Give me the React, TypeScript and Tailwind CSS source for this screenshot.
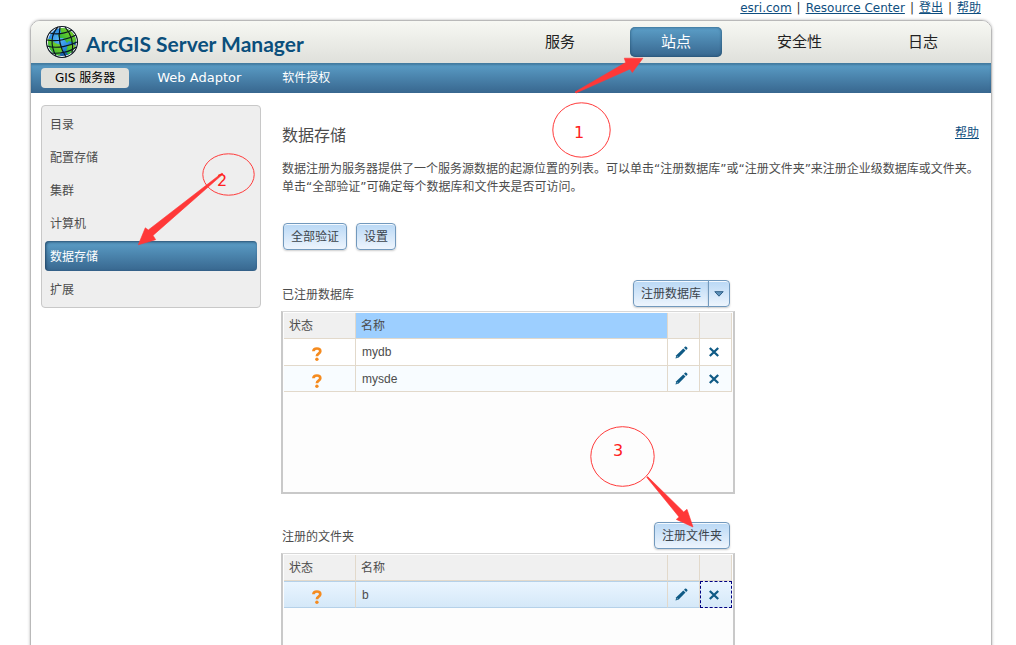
import React from "react";

const topLinks = ["esri.com", "Resource Center", "登出", "帮助"];
const mainTabs = ["服务", "站点", "安全性", "日志"];
const sideItems = ["目录", "配置存储", "集群", "计算机", "数据存储", "扩展"];

function Globe() {
  return (
    <svg viewBox="0 0 34 34" className="size-[34px] shrink-0" aria-hidden="true">
      <defs>
        <radialGradient id="sea" cx="0.4" cy="0.4" r="0.65">
          <stop offset="0" stopColor="#5cbcf8" />
          <stop offset="0.6" stopColor="#2484de" />
          <stop offset="1" stopColor="#12508f" />
        </radialGradient>
        <linearGradient id="land" x1="1" y1="0" x2="0" y2="1">
          <stop offset="0" stopColor="#8fd02a" />
          <stop offset="0.5" stopColor="#5cc62c" />
          <stop offset="1" stopColor="#10a850" />
        </linearGradient>
        <clipPath id="disc">
          <circle cx="17" cy="17" r="14" />
        </clipPath>
      </defs>
      <circle cx="17" cy="17" r="15.5" fill="#fff" />
      <circle cx="17" cy="17" r="14" fill="url(#sea)" />
      <g clipPath="url(#disc)">
        <path d="M15 3l7 0 6 5 4 7-3 3-5-2-2 2-4-5-4 0-1-3 3-2z" fill="url(#land)" />
        <path d="M2 14l4 0 4 4 6 2 2 5-3 4-1 3-7-3-5-8z" fill="url(#land)" />
        <path d="M23 20l5-1 3 2-3 6-5 3-2-4z" fill="url(#land)" />
      </g>
      <g fill="none" stroke="#0b1620" strokeWidth="1.15">
        <circle cx="17" cy="17" r="15.5" />
        <path d="M13 2C6 9 5 20 11 31M15 2C13 12 15 23 21 32M20 2C26 9 29 18 27 28" />
        <path d="M5 8C13 10 21 8 27 5M2 15C12 17 24 14 31 10M2 21C12 24 25 21 32 17M6 28C14 29 25 27 31 22" />
      </g>
    </svg>
  );
}

function Question() {
  return (
    <svg viewBox="0 0 10 14" className="mt-1 ml-7 h-[14px] w-[10px]" role="img" aria-label="未知">
      <path d="M1.4 4.300C1.500 2.200 2.900 1.500 4.900 1.500s3.400 1 3.400 2.800c0 2.500-3.400 2.300-3.400 5" fill="none" stroke="#f58b1f" strokeWidth="2.7" />
      <circle cx="4.900" cy="12.300" r="1.700" fill="#f58b1f" />
    </svg>
  );
}

function Pencil() {
  return (
    <svg viewBox="0 0 13 13" className="size-[13px]" aria-hidden="true">
      <path d="M.5 12.500l.8-3.300 7-6.800 2.200 2.200-6.800 7z" fill="#0f5a85" />
      <path d="M9 1.700l1.200-1.100c.8-.5 2.700 1.300 2.200 2.100l-1.200 1.200z" fill="#0f5a85" />
      <path d="M1.500 11.500l.5-1.600 1.100 1.100z" fill="#9cc3d8" />
    </svg>
  );
}

function Cross() {
  return (
    <svg viewBox="0 0 10 10" className="size-[10px]" aria-hidden="true">
      <path d="M.8 1l8.400 8M9.200 1L.8 9" stroke="#0f5a85" strokeWidth="2.3" />
    </svg>
  );
}

const buttonLook =
  "h-[27px] border border-[#7299bd] bg-linear-to-b from-[#b9d8f5] to-[#eef5fd] text-[#3b444c] shadow-[inset_0_1px_0_#f3f9ff,0_1px_2px_rgba(0,0,0,0.2)]";

function Button({ children }: { children: React.ReactNode }) {
  return <button type="button" className={`${buttonLook} rounded-[4px] px-[7px]`}>{children}</button>;
}

type GridProps = { label: string; rows: string[]; highlightName?: boolean; selected?: boolean };

function Grid({ label, rows, highlightName, selected }: GridProps) {
  const line = selected ? "border-y border-y-[#b5d1e9]" : "border-b border-b-[#e2d9cb]";
  const fill = (i: number) =>
    selected ? "bg-linear-to-b from-[#eaf5ff] to-[#d4e8f8]" : i % 2 ? "bg-[#f8fcff]" : "bg-white";
  const head = "h-[26px] border-r border-b border-[#e2d9cb] px-[5px] text-left font-normal";
  return (
    <div className="min-h-[183px] border-2 border-t border-[#c9c9c9] border-t-[#d8d8d8] bg-[#fdfdfd] p-px">
      <table aria-label={label} className="w-full table-fixed border-separate border-spacing-0">
        <colgroup>
          <col className="w-[72px]" />
          <col />
          <col className="w-8" />
          <col className="w-8" />
        </colgroup>
        <thead className="bg-[#f0f0f0]">
          <tr>
            <th className={head}>状态</th>
            <th className={`${head} ${highlightName ? "bg-[#9dcfff]" : ""}`}>名称</th>
            <th className={head} aria-label="编辑" />
            <th className={head} aria-label="删除" />
          </tr>
        </thead>
        <tbody className="font-['Liberation_Sans','Noto_Sans_CJK_SC',sans-serif]">
          {rows.map((name, i) => (
            <tr key={name} className={fill(i)}>
              <td className={`${i % 2 ? "h-[26px]" : "h-[27px]"} border-r border-r-[#e2d9cb] p-0 ${line}`}><Question /></td>
              <td className={`border-r border-r-[#e2d9cb] py-0 px-[6px] ${line}`}>{name}</td>
              <td className={`border-r border-r-[#e2d9cb] p-0 ${line}`}>
                <button type="button" aria-label={`编辑 ${name}`} className="flex h-6 w-full items-center pl-[7px]"><Pencil /></button>
              </td>
              <td className={selected ? "border border-dashed border-[#000080] p-0" : `border-r border-r-[#e2d9cb] p-0 ${line}`}>
                <button type="button" aria-label={`删除 ${name}`} className={`flex h-6 w-full items-center ${selected ? "pl-2" : "pl-[9px]"}`}><Cross /></button>
              </td>
            </tr>
          ))}
        </tbody>
      </table>
    </div>
  );
}

function Annotations() {
  return (
    <svg viewBox="0 0 760 600" className="pointer-events-none absolute top-0 left-0 h-[600px] w-[760px] font-['DejaVu_Sans',sans-serif]">
      <g fill="none" stroke="#ff3b3b" strokeWidth="1">
        <ellipse cx="581.5" cy="130" rx="28.7" ry="27.2" />
        <ellipse cx="228.5" cy="174.5" rx="25.7" ry="20.7" />
        <ellipse cx="622.5" cy="456.5" rx="31.7" ry="29.8" />
      </g>
      <g fill="#ff3838" stroke="#ff3838" strokeWidth="0.6" strokeLinejoin="round">
        <path d="M575 92L625.7 62.500 624.3 58.200H642.900L632.3 72.500 630 69 576 93z" />
        <path d="M223 174L153 235.400 155.700 239.700 138.300 244.800 145.300 227.800 148.300 230 222 173z" />
        <path d="M647.600 476.600L683.700 512 687 509.300 693 527 676.300 519.400 679 516.900 646.800 477.400z" />
      </g>
      <g fill="#ff2020" fontSize="16" textAnchor="middle">
        <text x="579" y="138">1</text>
        <text x="222" y="186">2</text>
        <text x="618" y="456">3</text>
      </g>
    </svg>
  );
}

export default function App() {
  return (
    <div className="relative min-h-screen overflow-hidden bg-white pb-6 font-['DejaVu_Sans','Noto_Sans_CJK_SC',sans-serif] text-[12px] leading-[18px] text-[#4c4c4c]">
      <nav aria-label="链接" className="flex h-5 items-start justify-end pr-[35px] leading-4 text-[#333]">
        {topLinks.map((t, i) => (
          <React.Fragment key={t}>
            {i > 0 && <span className="px-[5px]">|</span>}
            <a href="#" className="text-[#0f4f80] underline">{t}</a>
          </React.Fragment>
        ))}
      </nav>

      <div className="mr-6 ml-[30px] rounded-t-[10px] border border-[#b9b9b9] shadow-[0_0_3px_rgba(0,0,0,0.3)]">
        <header className="flex h-[42px] items-center rounded-t-[9px] bg-linear-to-b from-[#f7f8f3] to-[#dfe0db] pr-[22px] pl-[14px]">
          <Globe />
          <h1 className="ml-[7px] pt-1 font-['Lato',sans-serif] text-[21px] leading-6 font-bold whitespace-nowrap text-[#0b4f7c]">
            ArcGIS Server Manager
          </h1>
          <nav aria-label="主菜单" className="ml-auto flex gap-6 text-[15px]">
            {mainTabs.map((t) => (
              <a
                key={t}
                href="#"
                className={
                  t === "站点"
                    ? "rounded-[5px] bg-linear-to-b from-[#5c9fc8] to-[#38678f] px-[31px] text-white leading-[30px] shadow-[inset_0_0_3px_rgba(20,60,90,0.8)]"
                    : "px-[31px] leading-[30px] text-[#222]"
                }
              >
                {t}
              </a>
            ))}
          </nav>
        </header>

        <nav aria-label="站点菜单" className="flex h-[30px] items-center gap-[15px] bg-linear-to-b from-[#5c9fc8] to-[#38678f] px-[10px] text-white shadow-[inset_0_2px_2px_rgba(30,70,100,0.4)]">
          <a href="#" className="rounded-[4px] bg-[#e0e1dc] px-[14px] leading-5 text-black">GIS 服务器</a>
          <a href="#" className="px-[13px] text-[13px] leading-5">Web Adaptor</a>
          <a href="#" className="px-[13px] leading-5">软件授权</a>
        </nav>

        <div className="flex items-start gap-5 pt-3 pr-3 pl-[10px]">
          <nav aria-label="GIS 服务器" className="flex w-[220px] shrink-0 flex-col gap-[3px] rounded-[4px] border border-[#c8c8c8] bg-[#eee] p-[3px]">
            {sideItems.map((t) => (
              <a
                key={t}
                href="#"
                className={
                  t === "数据存储"
                    ? "rounded-[4px] bg-linear-to-b from-[#5c9fc8] to-[#38678f] px-[5px] pt-[2px] leading-[28px] text-white shadow-[inset_1px_1px_3px_rgba(20,50,80,0.8)]"
                    : "px-[5px] pt-[2px] leading-[28px]"
                }
              >
                {t}
              </a>
            ))}
          </nav>

          <main className="min-w-0 flex-1 pt-[19px]">
            <div className="flex items-start justify-between pl-px">
              <h2 className="text-[16px] leading-6">数据存储</h2>
              <a href="#" className="text-[#0f4f80] underline">帮助</a>
            </div>
            <p className="mt-3 -mr-2 pl-px">
              数据注册为服务器提供了一个服务源数据的起源位置的列表。可以单击“注册数据库”或“注册文件夹”来注册企业级数据库或文件夹。
              <br />
              单击“全部验证”可确定每个数据库和文件夹是否可访问。
            </p>
            <div className="mt-[27px] flex gap-[9px] pl-[2px]">
              <Button>全部验证</Button>
              <Button>设置</Button>
            </div>

            <section className="mt-[30px] max-w-[454px]">
              <div className="mb-1 flex items-center justify-between pr-[5px] pl-px">
                <h3 className="pt-[2px]">已注册数据库</h3>
                <div className="flex">
                  <button type="button" className={`${buttonLook} rounded-l-[4px] px-[7px]`}>注册数据库</button>
                  <button type="button" aria-label="更多" className={`${buttonLook} -ml-px flex w-[22px] items-center justify-center rounded-r-[4px]`}>
                    <svg viewBox="0 0 10 6" className="h-[6px] w-[10px]" aria-hidden="true">
                      <path d="M.8.7h8.400L5 5.200z" fill="#5f92bb" stroke="#2f5f87" />
                    </svg>
                  </button>
                </div>
              </div>
              <Grid label="已注册数据库" rows={["mydb", "mysde"]} highlightName />
            </section>

            <section className="mt-[28px] max-w-[454px]">
              <div className="mb-1 flex items-center justify-between pr-[5px] pl-px">
                <h3 className="pt-[2px]">注册的文件夹</h3>
                <Button>注册文件夹</Button>
              </div>
              <Grid label="注册的文件夹" rows={["b"]} selected />
            </section>
          </main>
        </div>
      </div>
      <Annotations />
    </div>
  );
}
